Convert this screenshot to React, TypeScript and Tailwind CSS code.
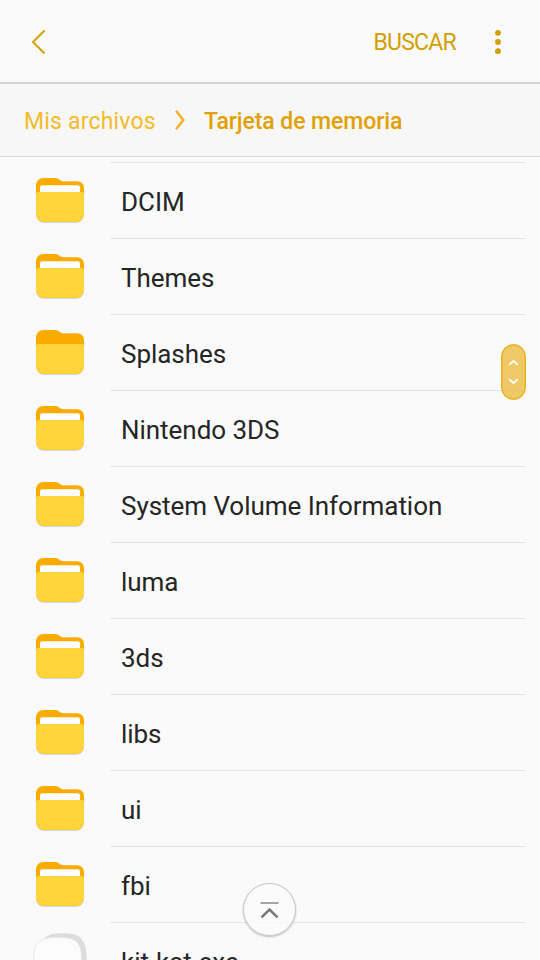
type Entry = {
  name: string;
  kind: "folder" | "empty-folder" | "file";
};

const entries: Entry[] = [
  { name: "DCIM", kind: "folder" },
  { name: "Themes", kind: "folder" },
  { name: "Splashes", kind: "empty-folder" },
  { name: "Nintendo 3DS", kind: "folder" },
  { name: "System Volume Information", kind: "folder" },
  { name: "luma", kind: "folder" },
  { name: "3ds", kind: "folder" },
  { name: "libs", kind: "folder" },
  { name: "ui", kind: "folder" },
  { name: "fbi", kind: "folder" },
  { name: "kit-kat.exe", kind: "file" },
];

function FolderIcon({ empty }: { empty: boolean }) {
  return (
    <svg width="48" height="46" viewBox="0 0 48 46" className="ml-9 mt-[15px] shrink-0 overflow-visible">
      <path d="M0 22h48v14.800a8 8 0 0 1-8 8H8a8 8 0 0 1-8-8z" fill="#c9c9c4" />
      <path d="M0 20V8C0 3 3 0 8 0H19.500c3.500 0 4.500 3.300 8 3.300H41c4.300 0 7 3 7 7V20z" fill="#f9ab00" />
      {!empty && <path d="M4 16V9.500A2.200 2.200 0 0 1 6.200 7.300H41.800A2.200 2.200 0 0 1 44 9.500V16z" fill="#fff" />}
      <path d="M0 16.500a2.500 2.500 0 0 1 2.500-2.500h43a2.500 2.500 0 0 1 2.500 2.500V36a8 8 0 0 1-8 8H8a8 8 0 0 1-8-8z" fill="#ffd43a" />
    </svg>
  );
}

function FileIcon() {
  return (
    <svg width="54" height="54" viewBox="0 0 54 54" className="ml-[33px] mt-[10px] shrink-0">
      <path d="M10 7C15 1.500 20 0.300 30 0.300C47 0.300 53.500 6 53.500 24V54H40L12 10z" fill="#dcdcdc" />
      <path d="M0.700 54V24C0.700 9 8 4.300 25 4.300C43 4.300 48.500 9 48.500 26V54z" fill="#fcfcfc" stroke="#e2e2e2" strokeWidth="0.700" />
    </svg>
  );
}

function Row({ entry }: { entry: Entry }) {
  return (
    <div className="flex h-[76px] shrink-0">
      <div className="w-[110px] shrink-0">
        {entry.kind === "file" ? <FileIcon /> : <FolderIcon empty={entry.kind === "empty-folder"} />}
      </div>
      <div className="mr-[15px] flex flex-1 items-center border-b border-[#e4e4e4] pl-[11px] pt-[3px] text-[26px] leading-8 tracking-[-0.040px] text-[#252525]">
        {entry.name}
      </div>
    </div>
  );
}

export default function App() {
  return (
    <div className="relative flex h-[960px] w-[540px] flex-col overflow-hidden bg-[#fafafa] font-[Roboto,sans-serif]">
      <header className="flex h-[84px] shrink-0 items-center border-b-2 border-[#d2d2d2] pt-[2px] text-[#d39e00]">
        <svg width="16" height="26" viewBox="0 0 16 26" className="ml-[31px]" fill="none" stroke="currentColor" strokeWidth="1.900">
          <path d="M13.500 1.500L2 13L13.500 24.500" />
        </svg>
        <button className="ml-auto mr-[38px] pt-[2px] text-[23px] tracking-[-0.750px]">BUSCAR</button>
        <svg width="8" height="26" viewBox="0 0 8 26" className="mr-[38px]" fill="currentColor">
          <circle cx="4" cy="3.800" r="2.900" />
          <circle cx="4" cy="13" r="2.900" />
          <circle cx="4" cy="22.200" r="2.900" />
        </svg>
      </header>

      <nav className="flex h-[73px] shrink-0 items-center border-b border-[#d9d9d9] bg-[#f7f7f7] pl-6 text-[23px]">
        <span className="w-[132px] whitespace-nowrap pt-1 tracking-[0.180px] text-[#f3bb2c]">Mis archivos</span>
        <svg width="12" height="22" viewBox="0 0 12 22" className="ml-[18px] mr-[18px] shrink-0" fill="none" stroke="#f0b429" strokeWidth="2.600">
          <path d="M2 1.700L9.300 11L2 20.300" />
        </svg>
        <span className="whitespace-nowrap pt-1 font-medium tracking-[-0.080px] text-[#e2a000]">Tarjeta de memoria</span>
      </nav>

      <main className="flex min-h-0 flex-1 flex-col overflow-hidden">
        <div className="ml-[110px] mr-[15px] h-[6px] shrink-0 border-b border-[#e4e4e4]" />
        {entries.map(entry => (
          <Row key={entry.name} entry={entry} />
        ))}
      </main>

      <div className="absolute left-[501px] top-[344px] flex h-14 w-[25px] items-center justify-center rounded-full border border-[#ecb01a] bg-[#ecc04c]/85 shadow-[inset_0_0_0_0.500px_#ecb01a]">
        <svg width="11" height="26" viewBox="0 0 11 26" fill="none" stroke="#fff" strokeWidth="1.600">
          <path d="M1.200 5.800L5.500 1.800L9.800 5.800M1.200 20.200L5.500 24.200L9.800 20.200" />
        </svg>
      </div>

      <button className="absolute left-[243px] top-[883px] flex h-[53px] w-[53px] items-center justify-center rounded-full border border-[#c4c4c4] bg-[#fafafa]/85 shadow-[0_1px_2px_rgba(0,0,0,0.25)]">
        <svg width="19" height="18" viewBox="0 0 19 18" className="mt-px" fill="none">
          <path d="M0.500 2H18.500" stroke="#a5a5a5" strokeWidth="2" />
          <path d="M1.500 16.300L9.500 8.500L17.500 16.300" stroke="#777" strokeWidth="2.500" />
        </svg>
      </button>
    </div>
  );
}
